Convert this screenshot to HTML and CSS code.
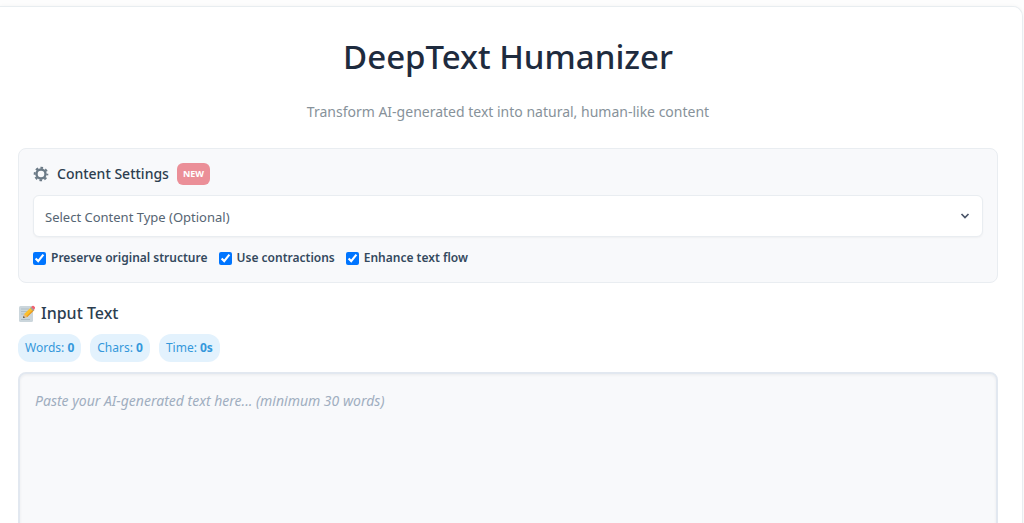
FILE: index.html
```html
<!DOCTYPE html>
<html lang="en">
<head>
    <meta charset="UTF-8">
    <meta name="viewport" content="width=device-width, initial-scale=1.0">
    <title>DeepText Humanizer</title>
    <link rel="stylesheet" href="styles.css">
</head>
<body>
    <div class="container">
        <header class="header">
            <h1>DeepText Humanizer</h1>
            <p class="subtitle">Transform AI-generated text into natural, human-like content</p>
        </header>

        <section class="settings-panel">
            <div class="settings-title">
                <svg class="gear-icon" viewBox="0 0 16 16" aria-hidden="true">
                    <g fill="none" stroke="#6b7a86">
                        <circle cx="8" cy="8" r="4.5" stroke-width="2.4"/>
                        <circle cx="8" cy="8" r="6.3" stroke-width="2" stroke-dasharray="2.6 2.348" stroke-dashoffset="1.3"/>
                    </g>
                </svg>
                <label for="contentType">Content Settings</label>
                <span class="new-badge">NEW</span>
            </div>
            <select class="content-select" id="contentType">
                <option value="">Select Content Type (Optional)</option>
                <option value="essay">Essay</option>
                <option value="blog">Blog Post</option>
                <option value="email">Email</option>
            </select>
            <div class="options">
                <label class="option"><input type="checkbox" id="preserveStructure" checked>Preserve original structure</label>
                <label class="option"><input type="checkbox" id="useContractions" checked>Use contractions</label>
                <label class="option"><input type="checkbox" id="enhanceFlow" checked>Enhance text flow</label>
            </div>
        </section>

        <section class="input-section">
            <label class="section-title" for="inputText">
                <svg class="memo-icon" viewBox="0 0 17 17" aria-hidden="true">
                    <rect x="1" y="1" width="14" height="16" rx="1.5" fill="#cbd6dc"/>
                    <path d="M3 4h8M3 6.500h6M3 9h4M3 14.500h9" stroke="#b0bec5" stroke-width="1"/>
                    <path d="M5 13l1.200-4 7-7 3 3-7.200 7z" fill="#fbc02d"/>
                    <path d="M8 11.800l7.300-7.600 1 1-7.300 7z" fill="#e79a25"/>
                    <path d="M5 13l1.200-4 2.800 3z" fill="#e8b98d"/>
                    <path d="M5 13l.6-2 1.400 1.400z" fill="#37474f"/>
                    <path d="M12.200 3l1-1 3 3-1 1z" fill="#90a4ae"/>
                    <path d="M13.200 2l1-1q.8-.7 1.600 0l1 1q.7.800 0 1.600L16 5z" fill="#f06272"/>
                </svg>
                Input Text
            </label>
            <div class="stats">
                <span class="stat">Words: <strong id="wordCount">0</strong></span>
                <span class="stat">Chars: <strong id="charCount">0</strong></span>
                <span class="stat">Time: <strong id="readTime">0s</strong></span>
            </div>
            <textarea class="input-text" id="inputText" placeholder="Paste your AI-generated text here... (minimum 30 words)"></textarea>
        </section>
    </div>

    <script>
        const input = document.getElementById('inputText');

        input.addEventListener('input', () => {
            const text = input.value.trim();
            const words = text ? text.split(/\s+/).length : 0;
            document.getElementById('wordCount').innerText = words;
            document.getElementById('charCount').innerText = input.value.length;
            document.getElementById('readTime').innerText = Math.ceil(words / 200 * 60) + 's';
        });
    </script>
</body>
</html>
```
FILE: styles.css
```css
* {
    box-sizing: border-box;
}

body {
    margin: 0;
    padding: 6px 1px 0 0;
    background: #fdfdfd;
    color: #2c3e50;
    font-family: "Segoe UI", "Noto Sans", sans-serif;
}

.container {
    padding: 24px 24px 24px 18px;
    background: #fff;
    border: 1px solid #e8edf0;
    border-left: none;
    border-radius: 0 10px 0 0;
    box-shadow: 0 0 4px rgba(0, 0, 0, 0.04);
}

.header {
    margin-bottom: 26px;
    text-align: center;
}

.header h1 {
    margin: 0 0 19px;
    color: #1e2b3e;
    font-size: 33px;
    font-weight: 500;
    line-height: 52px;
}

.subtitle {
    margin: 0;
    color: #87929a;
    font-size: 14px;
    line-height: 20px;
}

.settings-panel {
    padding: 14px;
    background: #f8f9fb;
    border: 1px solid #e9edf1;
    border-radius: 8px;
}

.settings-title {
    display: flex;
    align-items: center;
    gap: 8px;
    margin-bottom: 10px;
    font-size: 14px;
    font-weight: 500;
    line-height: 22px;
}

.gear-icon {
    width: 16px;
    height: 16px;
}

.new-badge {
    padding: 0 6px;
    background: #eb8f98;
    border-radius: 6px;
    color: #fff;
    font-size: 9px;
    font-weight: 700;
}

.content-select {
    display: block;
    width: 100%;
    height: 42px;
    padding: 2px 11px 0;
    appearance: none;
    background: #fff url("data:image/svg+xml,%3Csvg xmlns='http://www.w3.org/2000/svg' viewBox='0 0 10 6'%3E%3Cpath d='M1.500 1l3.500 3.500L8.500 1' fill='none' stroke='%234a5568' stroke-width='1.700'/%3E%3C/svg%3E") no-repeat right 12px center / 10px 6px;
    border: 1px solid #e9edf1;
    border-radius: 6px;
    box-shadow: 0 1px 2px rgba(0, 0, 0, 0.04);
    color: #566573;
    font-family: inherit;
    font-size: 13px;
}

.options {
    display: flex;
    gap: 11px;
    margin-top: 11px;
}

.option {
    display: flex;
    align-items: center;
    gap: 5px;
    color: #34495e;
    font-size: 12px;
    font-weight: 600;
    line-height: 20px;
}

.option input {
    width: 13px;
    height: 13px;
    margin: 0;
    accent-color: #0075ff;
}

.input-section {
    margin-top: 17px;
}

.section-title {
    display: flex;
    align-items: center;
    gap: 6px;
    font-size: 16px;
    font-weight: 500;
    line-height: 26px;
}

.memo-icon {
    width: 17px;
    height: 17px;
}

.stats {
    display: flex;
    gap: 9px;
    margin: 8px 0 10px;
}

.stat {
    padding: 0 7px;
    background: #e3f2fd;
    border-radius: 12px;
    color: #3498db;
    font-size: 12px;
    line-height: 28px;
}

.input-text {
    display: block;
    width: 100%;
    height: 250px;
    padding: 16px 15px;
    background: #f8f9fb;
    border: 2px solid #e2e8f0;
    border-radius: 8px;
    box-shadow: inset 0 1px 3px rgba(0, 0, 0, 0.06);
    color: #2c3e50;
    font-family: inherit;
    font-size: 14px;
    line-height: 22px;
    resize: vertical;
}

.input-text::placeholder {
    color: #a0aec0;
    font-style: italic;
}
```
